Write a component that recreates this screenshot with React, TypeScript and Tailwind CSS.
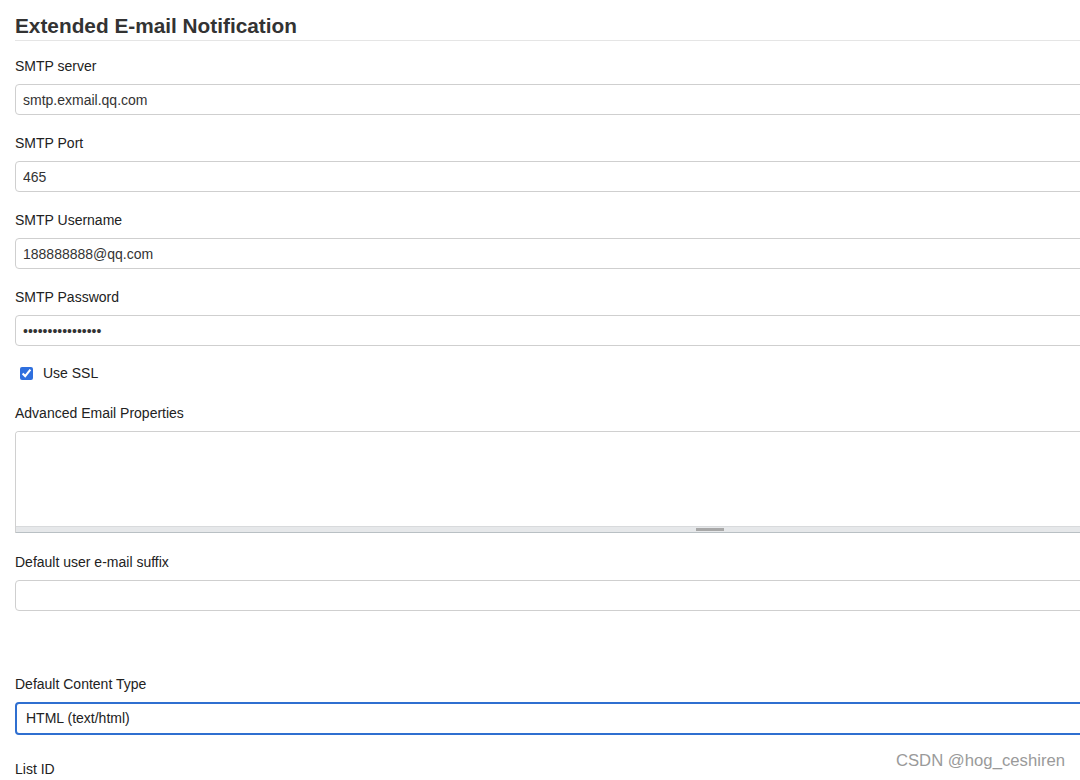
import React from "react";

const font = { fontFamily: '"Liberation Sans", Arial, sans-serif' };

function Label({ children }: { children: React.ReactNode }) {
  return <p className="h-5 pt-px text-[14px] leading-5 text-[#222]">{children}</p>;
}

function TextInput({ value, password }: { value: string; password?: boolean }) {
  return (
    <input
      readOnly
      type={password ? "password" : "text"}
      value={value}
      className="mt-[9px] block h-[31px] w-full rounded-[4px] border border-[#cfcfcf] bg-white px-[7px] text-[14px] text-[#333] outline-none"
    />
  );
}

export default function App() {
  return (
    <div className="relative h-[780px] w-[1080px] overflow-hidden bg-white" style={font}>
      <div className="w-[1405px] pl-[15px]">
        <div className="border-b border-[#e5e5e5] pt-[14px] pb-[2px]">
          <h2 className="text-[20.8px] font-bold leading-6 text-[#333]">Extended E-mail Notification</h2>
        </div>

        <div className="pt-[14px]">
          <Label>SMTP server</Label>
          <TextInput value="smtp.exmail.qq.com" />
        </div>
        <div className="pt-[17px]">
          <Label>SMTP Port</Label>
          <TextInput value="465" />
        </div>
        <div className="pt-[17px]">
          <Label>SMTP Username</Label>
          <TextInput value="188888888@qq.com" />
        </div>
        <div className="pt-[17px]">
          <Label>SMTP Password</Label>
          <TextInput value="aaaaaaaaaaaaaaaa" password />
        </div>

        <label className="mt-[17px] flex h-5 items-center gap-[10px] pl-[5px] pt-px text-[14px] text-[#222]">
          <input type="checkbox" readOnly checked className="h-[13px] w-[13px] accent-[#2f6fde]" />
          Use SSL
        </label>

        <div className="pt-[19px]">
          <Label>Advanced Email Properties</Label>
          <div className="mt-[9px] flex h-[102px] flex-col overflow-hidden rounded-t-[4px] border-x border-t border-[#d0d0d0]">
            <div className="flex-1 bg-white" />
            <div className="flex h-[7px] justify-center border-y border-t-[#d8dadc] border-b-[#b9c0c4] bg-[#e6e8ea] pt-[1px]">
              <div className="h-[3px] w-[28px] bg-[#a8a8a8]" />
            </div>
          </div>
        </div>

        <div className="pt-[18px]">
          <Label>Default user e-mail suffix</Label>
          <TextInput value="" />
        </div>

        <div className="pt-[62px]">
          <Label>Default Content Type</Label>
          <div className="mt-[9px] flex h-[33px] items-center rounded-[4px] border-2 border-[#2f6fd0] px-[9px] text-[14px] text-[#222]">
            HTML (text/html)
          </div>
        </div>

        <div className="pt-[23px]">
          <Label>List ID</Label>
        </div>
      </div>

      <div className="absolute right-[15px] bottom-[7px] text-[16.7px] text-[#9a9a9a]">CSDN @hog_ceshiren</div>
    </div>
  );
}
